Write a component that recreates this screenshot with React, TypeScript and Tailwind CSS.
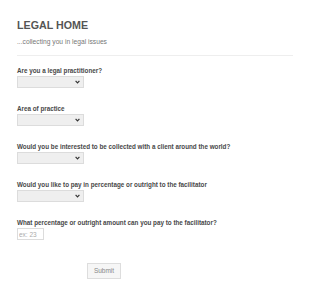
import React from "react";

function FakeSelect() {
  return (
    <div className="mt-[1px] flex h-[12px] w-[67px] items-center justify-end border border-[#dcdcdc] bg-[#efefef] pr-[3px]">
      <svg width="5" height="4" viewBox="0 0 5 4">
        <path d="M0.6 0.8 L2.5 2.8 L4.4 0.8" fill="none" stroke="#333" strokeWidth="1.2" />
      </svg>
    </div>
  );
}

function Field({ label, children }: { label: string; children: React.ReactNode }) {
  return (
    <div className="flex flex-col">
      <label className="text-[6.3px] font-bold leading-[9px] text-[#484848]">{label}</label>
      {children}
    </div>
  );
}

export default function App() {
  return (
    <div
      className="h-[295px] w-[310px] overflow-hidden bg-white px-[17px] pt-[19px]"
      style={{ fontFamily: '"Liberation Sans", Arial, sans-serif' }}
    >
      <h1 className="text-[10.7px] font-bold leading-[13px] text-[#555]">LEGAL HOME</h1>
      <p className="mt-[5px] text-[6.7px] leading-[9px] text-[#777]">...collecting you in legal issues</p>
      <div className="mt-[9px] h-px w-full bg-[#eeeeee]" />
      <div className="mt-[10px] flex flex-col gap-[16px]">
        <Field label="Are you a legal practitioner?">
          <FakeSelect />
        </Field>
        <Field label="Area of practice">
          <FakeSelect />
        </Field>
        <Field label="Would you be interested to be collected with a client around the world?">
          <FakeSelect />
        </Field>
        <Field label="Would you like to pay in percentage or outright to the facilitator">
          <FakeSelect />
        </Field>
        <Field label="What percentage or outright amount can you pay to the facilitator?">
          <input
            placeholder="ex: 23"
            className="mt-[1px] h-[12px] w-[27px] border border-[#dcdcdc] bg-white px-[1px] text-[6.5px] leading-[10px] text-[#999] placeholder:text-[#aaa] outline-none"
          />
        </Field>
      </div>
      <div className="mt-[16px] pl-[70px]">
        <button className="h-[16px] w-[34px] border border-[#dddddd] bg-[#f6f6f6] text-[6.5px] text-[#888]">
          Submit
        </button>
      </div>
    </div>
  );
}
